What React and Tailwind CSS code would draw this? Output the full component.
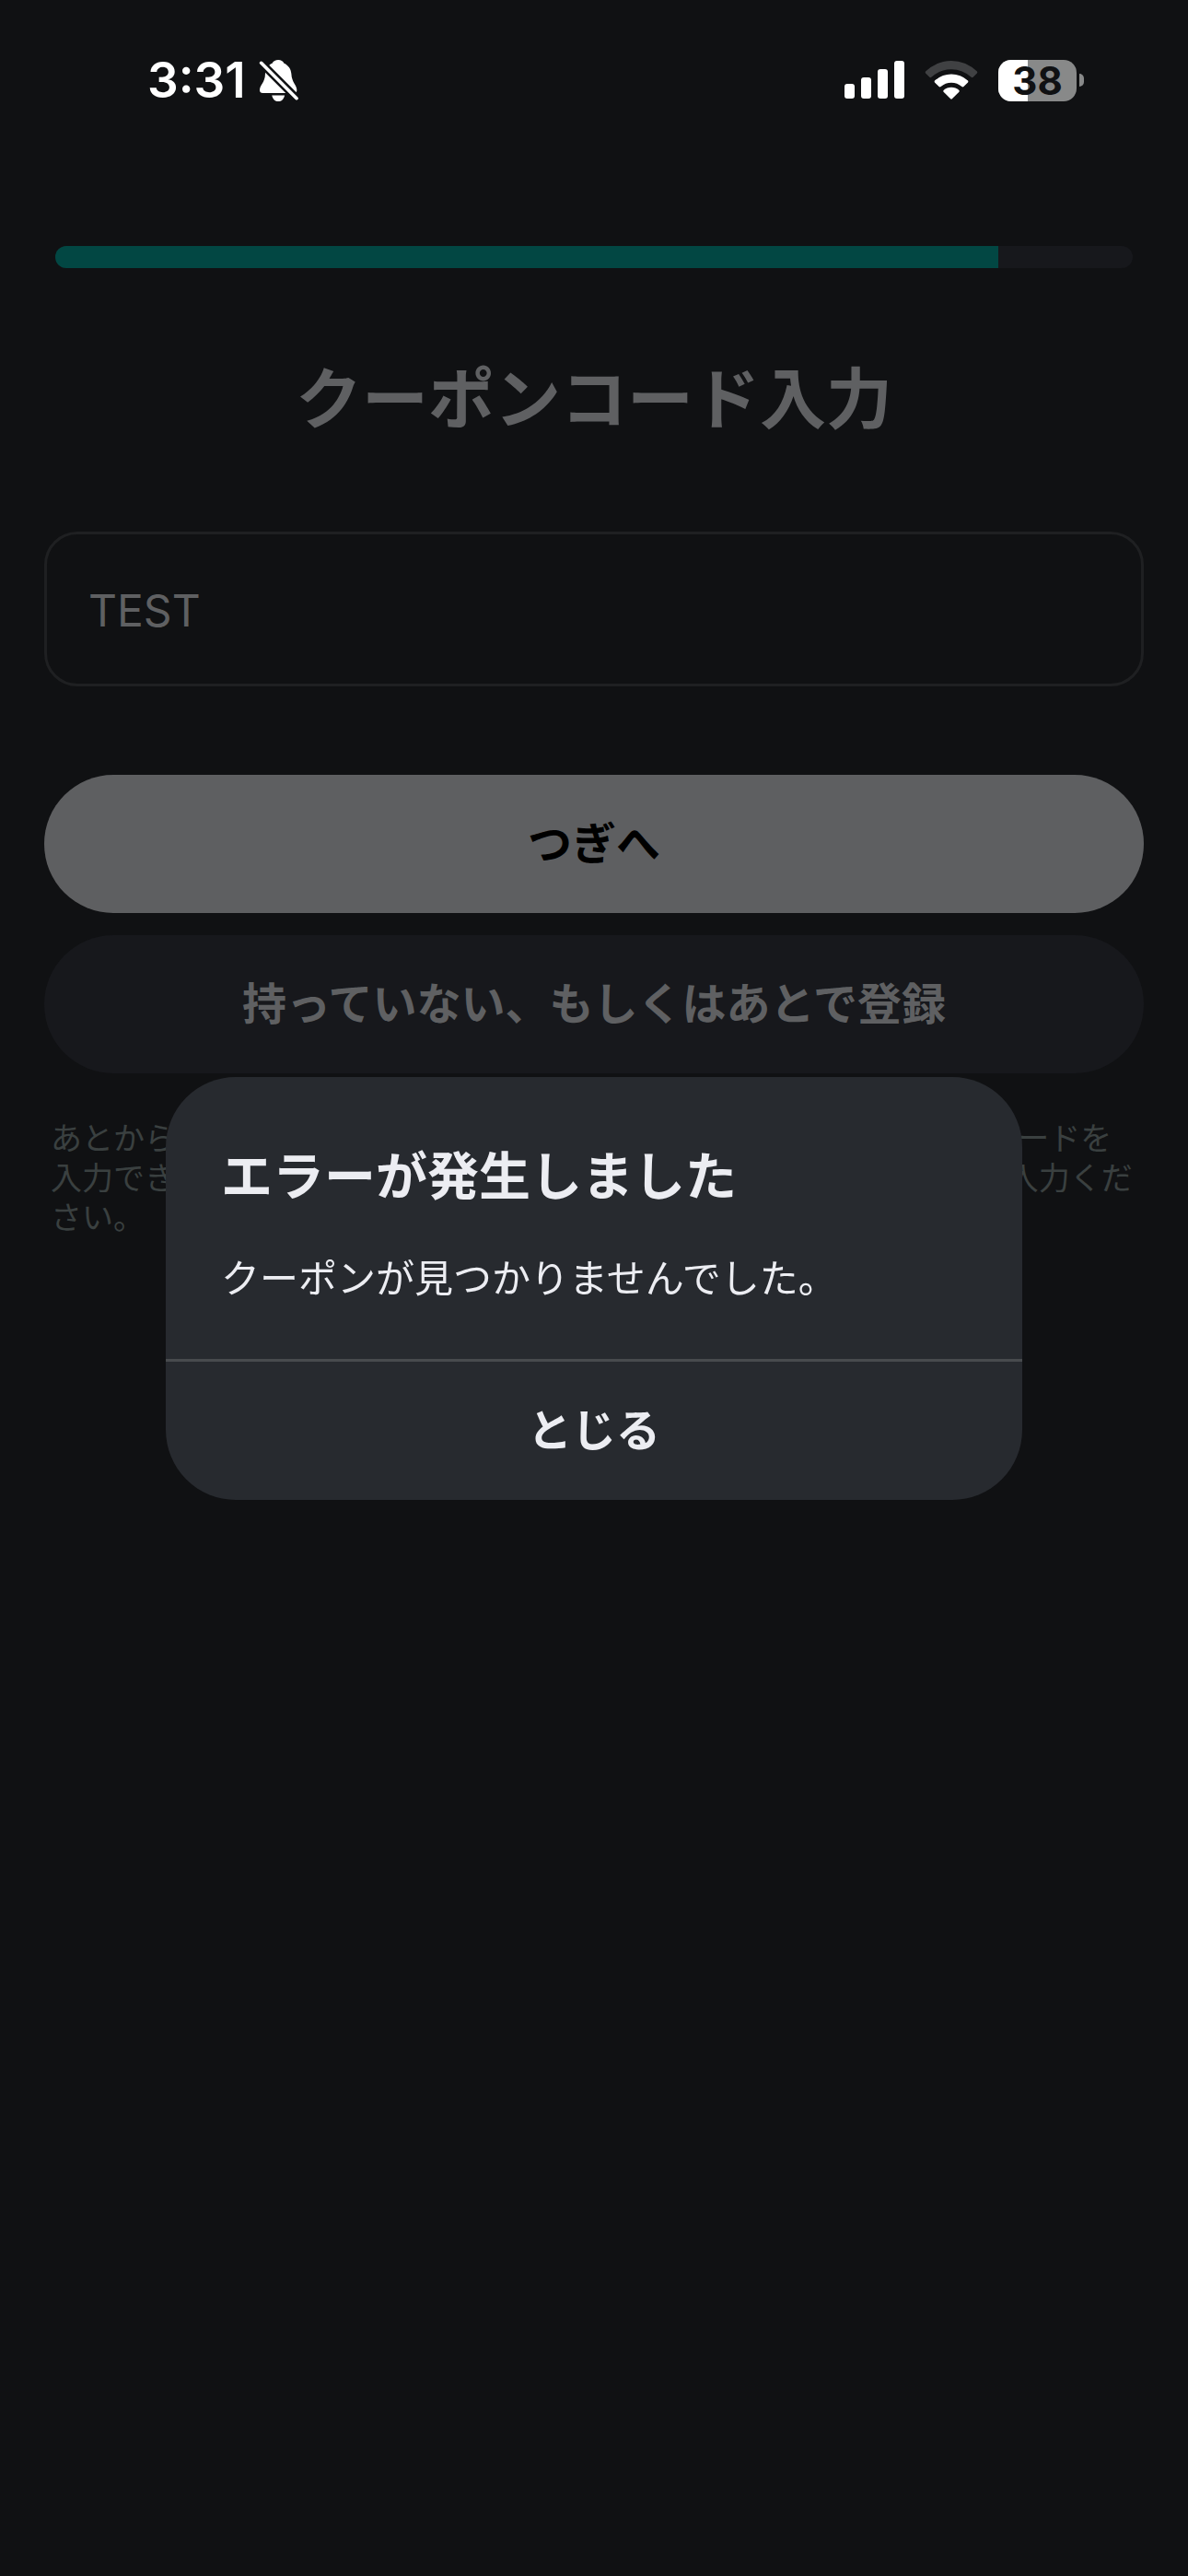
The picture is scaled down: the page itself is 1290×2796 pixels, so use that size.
import React, { useState } from "react";

const FONT = "font-['Inter','Noto_Sans_CJK_JP',sans-serif]";

function BellSlashIcon() {
  return (
    <svg viewBox="420 74 130 140" className="h-[47px] w-[43px]" aria-label="消音" role="img">
      <mask id="bell-cut" maskUnits="userSpaceOnUse" x="400" y="60" width="180" height="170">
        <rect x="400" y="60" width="180" height="170" fill="#fff" />
        <path d="M418 76L560 218" stroke="#000" strokeWidth="26" />
      </mask>
      <g mask="url(#bell-cut)" fill="#fff">
        <path d="M484 76C475 76 468 80 464 87C450 93 441 106 441 122C441 150 423 158 423 176C423 182 427 185 433 185H535C541 185 545 182 545 176C545 158 528 150 527 122C526 106 517 93 503 87C499 80 493 76 484 76Z" />
      </g>
      <path d="M463 192H505C502 205 494 212 484 212S466 205 463 192Z" fill="#fff" />
      <path d="M428 86L544 202" stroke="#fff" strokeWidth="11" strokeLinecap="round" />
    </svg>
  );
}

function SignalIcon() {
  return (
    <svg viewBox="0 0 65 42" className="h-[42px] w-[65px]" fill="#fff" aria-label="電波" role="img">
      <rect x="0" y="25" width="11" height="16" rx="3" />
      <rect x="18" y="18" width="11" height="23" rx="3" />
      <rect x="36" y="9" width="11" height="32" rx="3" />
      <rect x="54" y="0" width="11" height="41" rx="3" />
    </svg>
  );
}

function WifiIcon() {
  return (
    <svg viewBox="341 75 173 127" className="h-[42px] w-[58px]" aria-label="Wi-Fi" role="img">
      <path d="M343 110Q341 113 343 116L356 129Q359 131 362 129Q390 103 427.500 103T493 129Q496 131 499 129L512 116Q514 113 512 110Q475 75 427.500 75T343 110Z" fill="#404143" />
      <path d="M373 140Q371 143 373 146L387 160Q390 162 393 160Q408 147 427.500 147T462 160Q465 162 468 160L482 146Q484 143 482 140Q458 119 427.500 119T373 140Z" fill="#fff" />
      <path d="M402 172Q400 174 402 177L425 200Q427.500 202 430 200L453 177Q455 174 453 172Q442 162 427.500 162T402 172Z" fill="#fff" />
    </svg>
  );
}

function Battery({ level }) {
  return (
    <div className="flex items-center gap-[3px]" role="img" aria-label={`バッテリー ${level}%`}>
      <div className="relative flex h-[45px] w-[85px] items-center justify-center rounded-[14px] bg-[#888989]">
        <div className="absolute inset-y-0 left-0 rounded-l-[14px] bg-white" style={{ width: `${level}%` }} />
        <span className="relative text-[42px] leading-[45px] font-bold text-[#101113]">{level}</span>
      </div>
      <div className="h-[14px] w-[5px] rounded-r-full bg-[#888989]" />
    </div>
  );
}

function StatusBar() {
  return (
    <header className="flex h-[174px] items-center justify-between pr-[113px] pl-[160px] text-white">
      <div className="flex items-center gap-[14px]">
        <span className="text-[53px] leading-none font-semibold">3:31</span>
        <BellSlashIcon />
      </div>
      <div className="flex items-center gap-[22px]">
        <SignalIcon />
        <WifiIcon />
        <Battery level={38} />
      </div>
    </header>
  );
}

function PillButton({ className, children }) {
  return (
    <button
      type="button"
      className={`h-[150px] w-full rounded-full text-[48px] leading-none font-bold ${className}`}
    >
      {children}
    </button>
  );
}

function ErrorDialog({ onClose }) {
  return (
    <div className="fixed inset-0 flex items-center justify-center px-12">
      <div
        role="alertdialog"
        aria-modal="true"
        aria-labelledby="error-title"
        aria-describedby="error-message"
        className="w-[930px] max-w-full overflow-hidden rounded-[76px] bg-[#272a2f] text-[#ecedf2]"
      >
        <div className="flex flex-col gap-9 px-15 pt-[68px] pb-[52px]">
          <h2 id="error-title" className="text-[56px] leading-[80px] font-bold">エラーが発生しました</h2>
          <p id="error-message" className="text-[42px] leading-[70px]">クーポンが見つかりませんでした。</p>
        </div>
        <button
          type="button"
          onClick={onClose}
          className="h-[153px] w-full border-t-[3px] border-[#484b4e] text-[48px] leading-none font-bold"
        >
          とじる
        </button>
      </div>
    </div>
  );
}

export default function App() {
  const [code, setCode] = useState("TEST");
  const [open, setOpen] = useState(true);
  return (
    <div className={`min-h-screen bg-[#101113] text-[#5f6062] ${FONT}`} lang="ja">
      <StatusBar />
      <main className="flex flex-col px-12 pt-[93px]">
        <div
          role="progressbar"
          aria-label="登録の進み具合"
          aria-valuenow={87.5}
          className="mx-3 h-6 overflow-hidden rounded-full bg-[#17181c]"
        >
          <div className="h-full bg-[#024743]" style={{ width: "87.5%" }} />
        </div>
        <h1 className="mt-[90px] text-center text-[72px] leading-[104px] font-bold">クーポンコード入力</h1>
        <input
          type="text"
          aria-label="クーポンコード"
          value={code}
          onChange={(e) => setCode(e.target.value)}
          className="mt-[92px] h-[168px] w-full rounded-[36px] border-[3px] border-[#1f2022] bg-transparent px-[45px] pt-[2px] text-[48px] outline-none"
        />
        <div className="mt-24 flex flex-col gap-6">
          <PillButton className="bg-[#5e5f61] text-black">つぎへ</PillButton>
          <PillButton className="bg-[#17181c]">持っていない、もしくはあとで登録</PillButton>
        </div>
        <p className="mt-[49px] px-[7px] text-[34px] leading-[43px] text-[#3a4040]">
          あとからでもアプリの設定画面にあるメニューを開いて、クーポンコードを入力できますので、お持ちの方は後ほどマイページ2段目の欄からご入力ください。
        </p>
      </main>
      {open && <ErrorDialog onClose={() => setOpen(false)} />}
    </div>
  );
}
